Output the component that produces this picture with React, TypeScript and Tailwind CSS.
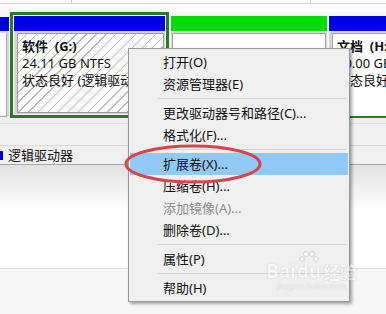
import React from "react";

type Item = { t: string; hl?: boolean; dis?: boolean } | "sep";

const items: Item[] = [
  { t: "打开(O)" },
  { t: "资源管理器(E)" },
  "sep",
  { t: "更改驱动器号和路径(C)..." },
  { t: "格式化(F)..." },
  "sep",
  { t: "扩展卷(X)...", hl: true },
  { t: "压缩卷(H)..." },
  { t: "添加镜像(A)...", dis: true },
  { t: "删除卷(D)..." },
  "sep",
  { t: "属性(P)" },
  "sep",
  { t: "帮助(H)" },
];

export default function App() {
  return (
    <div className="relative w-[386px] h-[314px] overflow-hidden bg-white text-[13px] text-[#111] font-['Noto_Sans','Noto_Sans_CJK_SC',sans-serif] leading-none">
      {/* top strip */}
      <div className="flex h-[3px]">
        <div className="w-[72px] shrink-0 border-r border-[#cdcdcd]" />
        <div className="w-[239px] shrink-0 border-r border-[#cdcdcd]" />
        <div className="flex-1" />
      </div>
      <div className="h-px bg-[#d6d6d6]" />
      <div className="h-[8px] bg-[#fbfbfb]" />

      {/* disk row */}
      <div className="flex h-[106px] bg-[#f6f6f6]">
        {/* left partition (cut) */}
        <div className="w-[9px] shrink-0 pt-[5px] pb-px flex flex-col">
          <div className="h-[14px] bg-[#0000e6]" />
          <div className="flex-1 bg-[#d8d8d8] pt-[2px] pr-[2px]">
            <div className="h-full bg-white border-r border-b border-[#a4a4a4]" />
          </div>
        </div>
        {/* selected G: */}
        <div className="ml-px w-[159px] shrink-0 border-[3px] border-[#2a7a2a] p-px flex flex-col">
          <div className="h-[15px] bg-[#0000e6]" />
          <div className="flex-1 min-h-0 bg-[#d6d6d6] pt-[2px] pl-[3px] pr-px pb-px">
            <div className="h-full overflow-hidden border border-[#9c9c9c] bg-[repeating-linear-gradient(135deg,#ffffff_0px,#ffffff_6px,#b9b9b9_6px,#b9b9b9_7px)] pl-[4px] pt-[4px] leading-[17px] whitespace-nowrap">
              <div className="font-bold">软件&nbsp;&nbsp;(G:)</div>
              <div>24.11 GB NTFS</div>
              <div>状态良好 (逻辑驱动器)</div>
            </div>
          </div>
        </div>
        {/* green partition */}
        <div className="ml-[2px] w-[156px] shrink-0 pt-[4px] pb-px flex flex-col">
          <div className="h-[15px] bg-[#00dd00]" />
          <div className="flex-1 bg-[#d6d6d6] pt-[2px] px-px">
            <div className="h-full bg-white border border-[#a4a4a4]" />
          </div>
        </div>
        {/* H: partition */}
        <div className="ml-[2px] flex-1 min-w-0 pt-[4px] flex flex-col">
          <div className="h-[15px] bg-[#0000e6]" />
          <div className="flex-1 bg-[#d6d6d6] pt-[2px] pl-[3px]">
            <div className="h-full bg-white border-l border-t border-[#a4a4a4] border-b-2 border-b-[#2a7a2a] pl-[4px] pt-[4px] leading-[17px] whitespace-nowrap overflow-hidden">
              <div className="font-bold">文档&nbsp;&nbsp;(H:)</div>
              <div>50.00 GB NTFS</div>
              <div>状态良好 (逻辑驱动器)</div>
            </div>
          </div>
        </div>
      </div>

      {/* below row */}
      <div className="h-[5px] bg-[#f0f0f0]" />
      <div className="h-px bg-[#dedede]" />
      <div className="h-[21px] bg-[#f0f0f0]" />
      <div className="h-px bg-[#d9d9d9]" />
      <div className="h-[18px] bg-[#f0f0f0] flex items-center">
        <div className="w-[3px] h-[9px] bg-[#0000e6] border-r border-[#000080]" />
        <span className="ml-[5px]">逻辑驱动器</span>
      </div>
      <div className="h-px bg-[#a9a9a9]" />
      <div className="h-[43px] bg-gradient-to-b from-[#e2e2e2] to-[#fdfdfd]" />
      <div className="h-[60px] bg-white" />
      <div className="h-px bg-[#e2e2e2]" />
      <div className="h-[46px] bg-[#f7f7f7]" />

      {/* context menu */}
      <div className="absolute left-[128px] top-[48px] w-[222px] h-[254px] bg-[#f0f0f0] border border-[#979797] shadow-[2px_2px_3px_rgba(0,0,0,0.35)] py-[2px] px-px">
        {items.map((it, i) =>
          it === "sep" ? (
            <div key={i} className="h-[7px] flex items-center">
              <div className="ml-[28px] mr-[2px] flex-1 h-px bg-[#d7d7d7]" />
            </div>
          ) : (
            <div
              key={i}
              className={
                it.hl
                  ? "h-[22px] flex items-center pl-[33px] bg-[#91c9f7]"
                  : "h-[22px] flex items-center pl-[33px]"
              }
            >
              <span className={it.dis ? "text-[#8d8d8d]" : "text-[#111]"}>{it.t}</span>
            </div>
          )
        )}
      </div>

      {/* red ellipse annotation */}
      <svg className="absolute left-0 top-0 pointer-events-none" width="386" height="314" viewBox="0 0 386 314">
        <ellipse cx="193" cy="164" rx="67" ry="18" fill="none" stroke="#d9434b" strokeWidth="3" />
      </svg>

      {/* watermark */}
      <div className="absolute left-[266px] top-[262px] flex flex-col items-center opacity-50 pointer-events-none">
        <div className="flex items-end text-[19px] font-bold text-white [text-shadow:0_0_1px_#8a8a8a]">
          <span>Bai</span>
          <span className="relative ml-px">
            <svg className="absolute left-[1px] top-[-12px]" width="22" height="14" viewBox="0 0 22 14">
              <circle cx="4" cy="9" r="2.5" fill="#fff" stroke="#999" strokeWidth="0.6" />
              <circle cx="8" cy="4" r="2.5" fill="#fff" stroke="#999" strokeWidth="0.6" />
              <circle cx="14" cy="4" r="2.5" fill="#fff" stroke="#999" strokeWidth="0.6" />
              <circle cx="18" cy="9" r="2.5" fill="#fff" stroke="#999" strokeWidth="0.6" />
            </svg>
            du
          </span>
          <span className="ml-[2px] text-[17px]">经验</span>
        </div>
        <div className="text-[8px] text-white [text-shadow:0_0_1px_#8a8a8a] mt-px">jingyan.baidu.com</div>
      </div>
    </div>
  );
}
